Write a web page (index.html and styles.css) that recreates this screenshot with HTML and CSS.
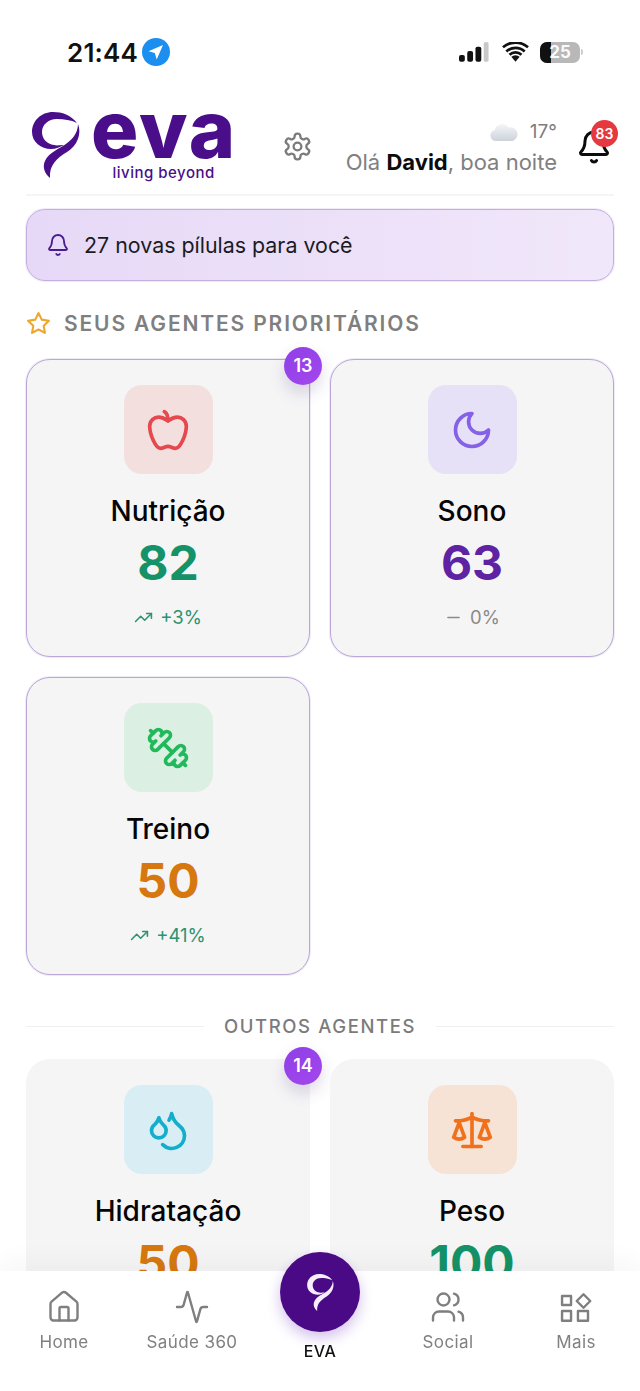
FILE: index.html
```html
<!DOCTYPE html>
<html lang="pt">
<head>
<meta charset="utf-8">
<title>EVA</title>
<link rel="stylesheet" href="styles.css">
</head>
<body>
<svg class="defs" width="0" height="0" aria-hidden="true">
  <symbol id="swirl" viewBox="30 110 52 70">
    <path d="M77 123C71 115 62 112 53 112C41 112 32 121 32 132C32 142 41 149 51 149C56 149 60 147 64 145C60 145 57 146 54 145C47 144 42 139 42 132C42 125 48 119 57 119C64 119 71 120 77 123Z"/>
    <path d="M78 124C82 134 77 146 67 152C57 158 49 165 50 178C45 174 42 167 45 161C48 154 56 150 63 146C71 141 78 134 78 124Z"/>
  </symbol>
  <symbol id="i-bell" viewBox="0 0 24 24">
    <path d="M10.268 21a2 2 0 0 0 3.464 0"/>
    <path d="M3.262 15.326A1 1 0 0 0 4 17h16a1 1 0 0 0 .74-1.673C19.41 13.956 18 12.499 18 8A6 6 0 0 0 6 8c0 4.499-1.411 5.956-2.738 7.326"/>
  </symbol>
  <symbol id="i-up" viewBox="0 0 24 24">
    <polyline points="22 7 13.5 15.5 8.5 10.5 2 17"/><polyline points="16 7 22 7 22 13"/>
  </symbol>
</svg>

<div class="status">
  <div class="status-left">
    <span class="time">21:44</span>
    <svg class="loc" viewBox="0 0 28 28"><circle cx="14" cy="14" r="14" fill="#1c8ef0"/><path d="M21 7 6.5 13.2l6.3 1.9 1.9 6.4z" fill="#fff"/></svg>
  </div>
  <div class="status-right">
    <svg class="signal" viewBox="0 0 32 20"><rect x="0" y="13" width="6" height="7" rx="2" fill="#111"/><rect x="8.500" y="9" width="6" height="11" rx="2" fill="#111"/><rect x="17" y="4.500" width="6" height="15.500" rx="2" fill="#111"/><rect x="25.500" y="0" width="5" height="20" rx="1.500" fill="#c8c8c8"/></svg>
    <svg class="wifi" viewBox="0 0 28 20"><path d="M14 20 9.700 15a6.500 6.500 0 0 1 8.600 0z" fill="#111"/><path d="M4.500 9.500a14 14 0 0 1 19 0M1 5a20 20 0 0 1 26 0M7.800 12.800a9 9 0 0 1 12.400 0" fill="none" stroke="#111" stroke-width="2.800"/></svg>
    <div class="battery"><span class="battery-fill"></span><span class="battery-num">25</span></div>
    <span class="battery-tip"></span>
  </div>
</div>

<header class="header">
  <div class="logo">
    <svg class="logo-mark"><use href="#swirl"/></svg>
    <div class="logo-text">
      <span class="logo-word">eva</span>
      <span class="logo-sub">living beyond</span>
    </div>
  </div>
  <svg class="gear" viewBox="0 0 24 24"><path d="M12.220 2h-.44a2 2 0 0 0-2 2v.18a2 2 0 0 1-1 1.730l-.43.25a2 2 0 0 1-2 0l-.15-.08a2 2 0 0 0-2.730.73l-.22.38a2 2 0 0 0 .73 2.730l.15.1a2 2 0 0 1 1 1.720v.51a2 2 0 0 1-1 1.740l-.15.09a2 2 0 0 0-.73 2.730l.22.38a2 2 0 0 0 2.730.73l.15-.08a2 2 0 0 1 2 0l.43.25a2 2 0 0 1 1 1.730V20a2 2 0 0 0 2 2h.44a2 2 0 0 0 2-2v-.18a2 2 0 0 1 1-1.730l.43-.25a2 2 0 0 1 2 0l.15.08a2 2 0 0 0 2.730-.73l.22-.39a2 2 0 0 0-.73-2.730l-.15-.08a2 2 0 0 1-1-1.740v-.5a2 2 0 0 1 1-1.740l.15-.09a2 2 0 0 0 .73-2.730l-.22-.38a2 2 0 0 0-2.730-.73l-.15.08a2 2 0 0 1-2 0l-.43-.25a2 2 0 0 1-1-1.730V4a2 2 0 0 0-2-2z"/><circle cx="12" cy="12" r="3"/></svg>
  <div class="greeting">
    <div class="weather">
      <svg class="cloud" viewBox="0 0 28 18"><defs><linearGradient id="cl" x1="0" y1="0" x2="0" y2="1"><stop offset="0" stop-color="#f4f6f8"/><stop offset="1" stop-color="#ccd3da"/></linearGradient></defs><path d="M6 18a5.500 5.500 0 0 1-1.200-10.900A7.500 7.500 0 0 1 18.500 4.500 6.800 6.800 0 0 1 22.500 18z" fill="url(#cl)"/></svg>
      <span>17°</span>
    </div>
    <div class="hello">Olá <b>David</b>, boa noite</div>
  </div>
  <div class="notif">
    <svg class="notif-bell"><use href="#i-bell"/></svg>
    <span class="notif-count">83</span>
  </div>
</header>

<main class="main">
  <div class="banner">
    <svg class="banner-bell"><use href="#i-bell"/></svg>
    <span>27 novas pílulas para você</span>
  </div>

  <div class="section-title">
    <svg class="star" viewBox="0 0 24 24"><polygon points="12 2 15.090 8.260 22 9.270 17 14.140 18.180 21.020 12 17.770 5.820 21.020 7 14.140 2 9.270 8.910 8.260 12 2"/></svg>
    <span>SEUS AGENTES PRIORITÁRIOS</span>
  </div>

  <div class="grid">
    <article class="card priority">
      <span class="badge">13</span>
      <div class="icon-box red">
        <svg viewBox="0 0 24 24"><path d="M12 20.940c1.500 0 2.750 1.060 4 1.060 3 0 6-8 6-12.220A4.910 4.910 0 0 0 17 5c-2.220 0-4 1.440-5 2-1-.56-2.780-2-5-2a4.900 4.900 0 0 0-5 4.780C2 14 5 22 8 22c1.250 0 2.500-1.060 4-1.060Z"/><path d="M10 2c1 .5 2 2 2 5"/></svg>
      </div>
      <h3 class="name">Nutrição</h3>
      <div class="score green">82</div>
      <div class="trend up"><svg><use href="#i-up"/></svg><span>+3%</span></div>
    </article>

    <article class="card priority">
      <div class="icon-box violet">
        <svg viewBox="0 0 24 24"><path d="M12 3a6 6 0 0 0 9 9 9 9 0 1 1-9-9Z"/></svg>
      </div>
      <h3 class="name">Sono</h3>
      <div class="score purple">63</div>
      <div class="trend flat"><svg viewBox="0 0 24 24"><path d="M5 12h14"/></svg><span>0%</span></div>
    </article>

    <article class="card priority">
      <div class="icon-box mint">
        <svg viewBox="0 0 24 24"><path d="M14.400 14.400 9.600 9.600"/><path d="M18.657 21.485a2 2 0 1 1-2.829-2.828l-1.767 1.768a2 2 0 1 1-2.829-2.829l6.364-6.364a2 2 0 1 1 2.829 2.829l-1.768 1.767a2 2 0 1 1 2.828 2.829z"/><path d="m21.500 21.500-1.400-1.400"/><path d="M3.900 3.900 2.500 2.500"/><path d="M6.404 12.768a2 2 0 1 1-2.829-2.829l1.768-1.767a2 2 0 1 1-2.828-2.829l2.828-2.828a2 2 0 1 1 2.829 2.828l1.767-1.768a2 2 0 1 1 2.829 2.829z"/></svg>
      </div>
      <h3 class="name">Treino</h3>
      <div class="score orange">50</div>
      <div class="trend up"><svg><use href="#i-up"/></svg><span>+41%</span></div>
    </article>
  </div>

  <div class="divider"><span>OUTROS AGENTES</span></div>

  <div class="grid">
    <article class="card">
      <span class="badge">14</span>
      <div class="icon-box sky">
        <svg viewBox="0 0 24 24"><path d="M7 16.300c2.200 0 4-1.830 4-4.050 0-1.160-.57-2.260-1.710-3.190S7.290 6.750 7 5.300c-.29 1.450-1.140 2.840-2.290 3.760S3 11.100 3 12.250c0 2.220 1.800 4.050 4 4.050z"/><path d="M12.560 6.600A10.970 10.970 0 0 0 14 3.020c.5 2.500 2 4.900 4 6.500s3 3.500 3 5.500a6.980 6.980 0 0 1-11.910 4.970"/></svg>
      </div>
      <h3 class="name">Hidratação</h3>
      <div class="score orange">50</div>
    </article>
    <article class="card">
      <div class="icon-box peach">
        <svg viewBox="0 0 24 24"><path d="m16 16 3-8 3 8c-.87.65-1.920 1-3 1s-2.130-.35-3-1Z"/><path d="m2 16 3-8 3 8c-.87.65-1.920 1-3 1s-2.130-.35-3-1Z"/><path d="M7 21h10"/><path d="M12 3v18"/><path d="M3 7h2c2 0 5-1 7-2 2 1 5 2 7 2h2"/></svg>
      </div>
      <h3 class="name">Peso</h3>
      <div class="score green">100</div>
    </article>
  </div>
</main>

<nav class="nav">
  <div class="nav-item">
    <svg viewBox="0 0 24 24"><path d="M15 21v-8a1 1 0 0 0-1-1h-4a1 1 0 0 0-1 1v8"/><path d="M3 10a2 2 0 0 1 .709-1.528l7-5.999a2 2 0 0 1 2.582 0l7 5.999A2 2 0 0 1 21 10v9a2 2 0 0 1-2 2H5a2 2 0 0 1-2-2z"/></svg>
    <span>Home</span>
  </div>
  <div class="nav-item">
    <svg viewBox="0 0 24 24"><path d="M22 12h-2.480a2 2 0 0 0-1.930 1.460l-2.350 8.360a.25.25 0 0 1-.48 0L9.240 2.180a.25.25 0 0 0-.48 0l-2.350 8.360A2 2 0 0 1 4.490 12H2"/></svg>
    <span>Saúde 360</span>
  </div>
  <div class="nav-item nav-eva">
    <div class="eva-btn"><svg><use href="#swirl"/></svg></div>
    <span>EVA</span>
  </div>
  <div class="nav-item">
    <svg viewBox="0 0 24 24"><path d="M16 21v-2a4 4 0 0 0-4-4H6a4 4 0 0 0-4 4v2"/><circle cx="9" cy="7" r="4"/><path d="M22 21v-2a4 4 0 0 0-3-3.870"/><path d="M16 3.130a4 4 0 0 1 0 7.750"/></svg>
    <span>Social</span>
  </div>
  <div class="nav-item">
    <svg viewBox="0 0 24 24"><rect x="2.700" y="4.700" width="6" height="6"/><path d="M17 3.500 21.500 8 17 12.500 12.500 8z"/><rect x="2.700" y="14.700" width="6" height="6.500"/><rect x="13.300" y="14.700" width="6.700" height="6.500"/></svg>
    <span>Mais</span>
  </div>
</nav>
</body>
</html>
```
FILE: styles.css
```css
* { box-sizing: border-box; }
html, body { margin: 0; padding: 0; }
body {
  width: 640px;
  height: 1391px;
  overflow: hidden;
  background: #fff;
  color: #000;
  font-family: Inter, "Liberation Sans", sans-serif;
}
.defs { display: block; height: 0; }

/* status bar */
.status {
  height: 100px;
  padding: 38px 57px 0 67px;
  display: flex;
  justify-content: space-between;
  align-items: flex-start;
}
.status-left { display: flex; align-items: center; gap: 4px; height: 28px; }
.time { font-size: 26px; font-weight: 600; color: #111; letter-spacing: .2px; }
.loc { width: 28px; height: 28px; }
.status-right { display: flex; align-items: center; height: 28px; }
.signal { width: 31px; height: 20px; margin-right: 12px; }
.wifi { width: 27px; height: 20px; margin-right: 11px; }
.battery {
  width: 40px;
  height: 21px;
  border-radius: 7px;
  background: #b8b8b8;
  overflow: hidden;
  position: relative;
}
.battery-fill { display: block; width: 11px; height: 100%; background: #111; }
.battery-num {
  position: absolute;
  inset: 0;
  text-align: center;
  color: #fff;
  font-size: 17px;
  font-weight: 700;
  line-height: 21px;
  opacity: .92;
}
.battery-tip { width: 2px; height: 6px; margin-left: 1px; background: #ccc; border-radius: 0 2px 2px 0; }

/* header */
.header {
  height: 96px;
  margin: 0 26px;
  border-bottom: 2px solid #f5f5f6;
  display: flex;
  position: relative;
}
.logo { width: 207px; margin-left: 4px; display: flex; flex: none; }
.logo-mark { width: 52px; height: 70px; margin-top: 10px; fill: #4a0e8a; flex: none; }
.logo-text { display: flex; flex-direction: column; align-items: center; margin-left: 9px; }
.logo-word {
  font-size: 79px;
  line-height: 58px;
  height: 58px;
  font-weight: 800;
  color: #4a0e8a;
  letter-spacing: 2px;
}
.logo-sub {
  font-size: 15px;
  line-height: 20px;
  font-weight: 500;
  color: #4a0e8a;
  letter-spacing: .5px;
  margin-top: 5px;
  margin-left: -1px;
}
.gear {
  width: 31px;
  height: 31px;
  margin: 31px 0 0 45px;
  fill: none;
  stroke: #7b7b7b;
  stroke-width: 1.800;
  stroke-linecap: round;
  stroke-linejoin: round;
  flex: none;
}
.greeting { margin-left: 32px; width: 212px; text-align: right; padding-top: 18px; flex: none; }
.weather { display: flex; justify-content: flex-end; align-items: center; gap: 12px; height: 27px; font-size: 19px; color: #7d7d7d; }
.cloud { width: 28px; height: 18px; }
.hello { font-size: 22px; line-height: 34px; color: #808080; white-space: nowrap; }
.hello b { color: #0c0c0c; font-weight: 700; }
.notif { position: relative; margin-left: 19px; padding-top: 29px; }
.notif-bell {
  width: 36px;
  height: 36px;
  fill: none;
  stroke: #0c0c0c;
  stroke-width: 2;
  stroke-linecap: round;
  stroke-linejoin: round;
}
.notif-count {
  position: absolute;
  top: 20px;
  left: 15px;
  width: 27px;
  height: 27px;
  border-radius: 50%;
  background: #e5383f;
  color: #fff;
  font-size: 14px;
  font-weight: 600;
  line-height: 27px;
  text-align: center;
}

/* main */
.main { padding: 13px 26px 0; }
.banner {
  height: 72px;
  border: 1px solid #c3aedf;
  box-shadow: 0 0 0 1px rgba(195, 175, 225, .25);
  border-radius: 19px;
  background: linear-gradient(90deg, #e6d9f7, #f1e7fa);
  display: flex;
  align-items: center;
  gap: 14px;
  padding-left: 19px;
  font-size: 21.400px;
  color: #1b1b1f;
}
.banner-bell {
  width: 24px;
  height: 24px;
  fill: none;
  stroke: #4a1d8f;
  stroke-width: 1.800;
  stroke-linecap: round;
  stroke-linejoin: round;
}
.section-title {
  height: 36px;
  margin: 24px 0 18px;
  display: flex;
  align-items: center;
  gap: 13px;
  font-size: 21px;
  font-weight: 600;
  letter-spacing: 1.850px;
  color: #7f7f7f;
}
.star {
  width: 25px;
  height: 25px;
  fill: none;
  stroke: #eea62b;
  stroke-width: 2;
  stroke-linejoin: round;
}
.grid { display: grid; grid-template-columns: 284px 284px; gap: 20px; }
.card {
  position: relative;
  height: 298px;
  border-radius: 24px;
  background: #f5f5f6;
  display: flex;
  flex-direction: column;
  align-items: center;
  padding-top: 26px;
}
.priority {
  border: 1px solid #bba8d8;
  box-shadow: 0 0 0 1px rgba(190, 170, 220, .25);
  padding-top: 25px;
}
.badge {
  position: absolute;
  top: -12px;
  right: -12px;
  width: 38px;
  height: 38px;
  border-radius: 50%;
  background: linear-gradient(145deg, #8f3fe6, #a347ee);
  box-shadow: 0 8px 16px rgba(80, 50, 120, .18);
  color: #fff;
  font-size: 18px;
  font-weight: 600;
  line-height: 38px;
  text-align: center;
}
.priority .badge { top: -13px; right: -13px; }
.icon-box {
  width: 89px;
  height: 89px;
  border-radius: 18px;
  display: flex;
  align-items: center;
  justify-content: center;
  flex: none;
}
.icon-box svg {
  width: 44px;
  height: 44px;
  fill: none;
  stroke: currentColor;
  stroke-width: 2;
  stroke-linecap: round;
  stroke-linejoin: round;
}
.red { background: #f4dfdf; color: #e5484d; }
.violet { background: #e6e1f6; color: #8461e6; }
.mint { background: #dcefe3; color: #22b85c; }
.sky { background: #d9edf4; color: #13aecb; }
.peach { background: #f6e3d5; color: #f0701c; }
.name { margin: 19px 0 0; font-size: 28px; line-height: 36px; font-weight: 500; color: #050505; }
.score { margin-top: 7px; font-size: 48px; line-height: 54px; font-weight: 700; }
.green { color: #159268; }
.purple { color: #5f22a3; }
.orange { color: #d6780f; }
.trend {
  margin-top: 15px;
  height: 24px;
  display: flex;
  align-items: center;
  gap: 7px;
  font-size: 18.500px;
}
.trend svg {
  width: 19px;
  height: 19px;
  fill: none;
  stroke: currentColor;
  stroke-width: 2;
  stroke-linecap: round;
  stroke-linejoin: round;
}
.up { color: #2e9270; }
.flat { color: #8a8a8a; }
.divider {
  height: 22px;
  margin: 40px 0 22px;
  display: flex;
  align-items: center;
  gap: 20px;
  font-size: 18.500px;
  font-weight: 500;
  letter-spacing: 1.600px;
  color: #7b7b7b;
}
.divider::before, .divider::after {
  content: "";
  flex: 1;
  height: 1px;
  background: #efeff1;
}

/* bottom nav */
.nav {
  position: fixed;
  left: 0;
  bottom: 0;
  width: 640px;
  height: 120px;
  background: #fff;
  box-shadow: 0 -10px 24px rgba(0, 0, 0, .035);
  display: grid;
  grid-template-columns: repeat(5, 128px);
}
.nav-item {
  display: flex;
  flex-direction: column;
  align-items: center;
  padding-top: 18px;
  font-size: 17px;
  letter-spacing: .4px;
  color: #808080;
}
.nav-item > svg {
  width: 36px;
  height: 36px;
  fill: none;
  stroke: #7f7f7f;
  stroke-width: 1.600;
  stroke-linecap: round;
  stroke-linejoin: round;
}
.nav-item > span { line-height: 24px; margin-top: 5px; }
.nav-eva { padding-top: 0; color: #111; font-size: 16px; font-weight: 500; }
.nav-eva > span { margin-top: 7px; }
.eva-btn {
  width: 80px;
  height: 80px;
  margin-top: -19px;
  border-radius: 50%;
  background: #4a0a85;
  box-shadow: 0 6px 14px rgba(110, 50, 190, .3);
  display: flex;
  align-items: center;
  justify-content: center;
}
.eva-btn svg { width: 29px; height: 39px; fill: #f6eefc; }
```
